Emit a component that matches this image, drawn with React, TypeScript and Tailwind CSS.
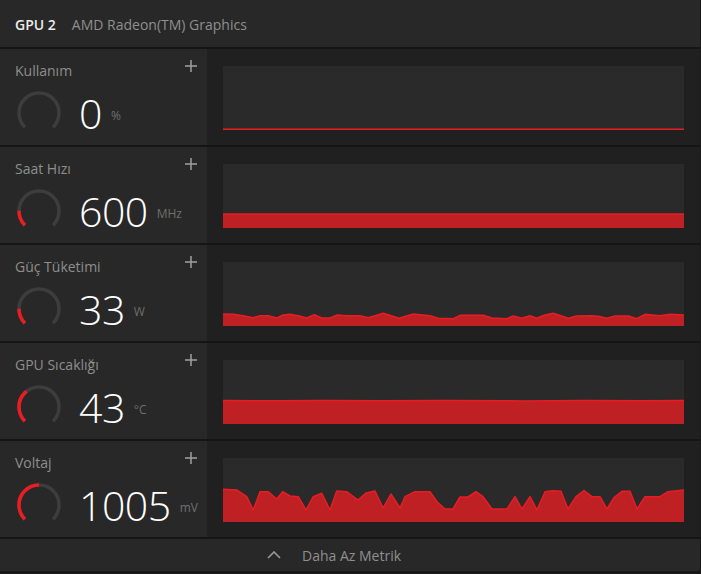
import React from 'react';

type Metric = {
  label: string;
  value: string;
  unit: string;
  pct: number;
  series: number[][];
};

const flat = (y: number) => [
  [0, y],
  [461, y],
];

const metrics: Metric[] = [
  { label: 'Kullanım', value: '0', unit: '%', pct: 0, series: flat(63.2) },
  { label: 'Saat Hızı', value: '600', unit: 'MHz', pct: 17, series: flat(50) },
  {
    label: 'Güç Tüketimi',
    value: '33',
    unit: 'W',
    pct: 17,
    series: [
      [0, 52], [10.3, 52.3], [20.3, 53.7], [30.3, 55.7], [37, 53.7], [45.3, 53.7], [53.7, 56], [60.3, 53],
      [67, 52.3], [75.3, 53.7], [83.7, 56], [91.3, 52.7], [98.7, 56], [107, 56], [114.3, 53], [123.7, 53.7],
      [137, 53.7], [145.3, 55.7], [160.3, 51.3], [176, 56.3], [190.3, 52], [207, 53.7], [215.3, 56.3],
      [230.3, 56.7], [237, 53.3], [260.3, 53.3], [268.7, 56], [283.7, 56.7], [290.3, 54], [298.7, 56.3],
      [307, 53.7], [313.7, 56.3], [322, 53], [330.3, 51.3], [345.3, 56.3], [353.7, 54], [368.7, 53.7],
      [375.3, 54.3], [383.7, 56.3], [392, 54], [405.3, 54], [413.7, 56.7], [422, 52.3], [437, 53.7],
      [447, 52.3], [461, 53],
    ],
  },
  {
    label: 'GPU Sıcaklığı',
    value: '43',
    unit: '°C',
    pct: 36,
    series: [
      [0, 40.5], [60, 40.8], [100, 40.5], [160, 40.8], [220, 40.5], [300, 40.9], [360, 40.5], [420, 40.8], [461, 40.5],
    ],
  },
  {
    label: 'Voltaj',
    value: '1005',
    unit: 'mV',
    pct: 50,
    series: [
      [0, 31.3], [13.7, 31.9], [23.7, 38.7], [30.3, 52], [37, 33.7], [45.3, 33.7], [53.7, 41], [59.7, 33.7],
      [67, 38], [75.3, 38.7], [83, 52], [90.3, 38.7], [98.7, 35.3], [107, 52], [113.7, 33], [123.7, 33.7],
      [135, 42], [143, 35], [152, 33], [160, 50], [168, 36], [177, 50], [182, 38.7], [192, 33.7], [207, 33.7],
      [214, 43.7], [222, 51], [230, 51], [237, 39], [245, 39], [253, 33.7], [260, 38.7], [269, 51], [284, 51],
      [292, 38.7], [299, 51], [307, 38.7], [314, 52], [322, 33.7], [330, 32.7], [338, 33.3], [345, 51],
      [353, 38.7], [361, 32.7], [369, 38.7], [377, 38.7], [384, 51], [391, 39.7], [399, 33.3], [407, 33.3],
      [414, 51], [422, 38.7], [437, 38.7], [445, 33.7], [461, 32],
    ],
  },
];

function Gauge({ pct }: { pct: number }) {
  const d = 'M 9.86 38.14 A 20 20 0 1 1 38.14 38.14';
  return (
    <svg width="48" height="48" viewBox="0 0 48 48" className="shrink-0">
      <path d={d} fill="none" stroke="#3d3d3d" strokeWidth="3.5" />
      {pct > 0 && (
        <path d={d} fill="none" stroke="#ec1c24" strokeWidth="3.5" pathLength={100} strokeDasharray={`${pct} 100`} />
      )}
    </svg>
  );
}

function Chart({ series }: { series: number[][] }) {
  const line = series.map(([x, y]) => `${x},${y}`).join(' ');
  const area = `0,64 ${line} 461,64`;
  return (
    <svg width="461" height="64" viewBox="0 0 461 64" className="block bg-[#2a2a2a]">
      <polygon points={area} fill="#be2024" />
      <polyline points={line} fill="none" stroke="#e81d24" strokeWidth="1.5" strokeLinejoin="round" />
    </svg>
  );
}

function Row({ m }: { m: Metric }) {
  return (
    <div className="flex h-[98px] border-b-2 border-[#151515]">
      <div className="w-[207px] bg-[#282828] pl-[15px] pr-[10px] pt-3">
        <div className="flex h-4 items-start justify-between">
          <span className="mt-[1.5px] text-[14px] leading-4 text-[#8e8e8e]">{m.label}</span>
          <svg width="12" height="12" viewBox="0 0 12 12" className="mt-[-1px]">
            <path d="M6 0v12M0 6h12" stroke="#a0a0a0" strokeWidth="1.5" />
          </svg>
        </div>
        <div className="mt-3 flex items-start">
          <Gauge pct={m.pct} />
          <span className="ml-[16px] mt-[4px] text-[41px] font-light leading-none tracking-[-0.5px] text-white">
            {m.value}
          </span>
          <span className="ml-[9px] mt-[19px] text-[12px] leading-4 text-[#6f6f6f]">{m.unit}</span>
        </div>
      </div>
      <div className="flex-1 bg-[#202020] px-4 pt-[17px]">
        <Chart series={m.series} />
      </div>
    </div>
  );
}

export default function App() {
  return (
    <div className="h-[574px] w-[701px] bg-[#181818] font-['Open_Sans',sans-serif]">
      <div className="w-[700px] overflow-hidden rounded-br-[3px] bg-[#282828]">
        <div className="flex h-[49px] items-start border-b-2 border-[#151515] px-[15px] pt-[17px]">
          <span className="text-[14px] font-semibold leading-4 text-[#ececec]">GPU 2</span>
          <span className="ml-[16px] text-[14px] leading-4 text-[#8f8f8f]">AMD Radeon(TM) Graphics</span>
        </div>
        {metrics.map((m) => (
          <Row key={m.label} m={m} />
        ))}
        <div className="flex h-[32px] items-center pl-[267px]">
          <svg width="14" height="8" viewBox="0 0 14 8">
            <path d="M1 7l6-6 6 6" fill="none" stroke="#9a9a9a" strokeWidth="1.6" />
          </svg>
          <span className="ml-[21px] text-[14px] text-[#8f8f8f]">Daha Az Metrik</span>
        </div>
      </div>
    </div>
  );
}
